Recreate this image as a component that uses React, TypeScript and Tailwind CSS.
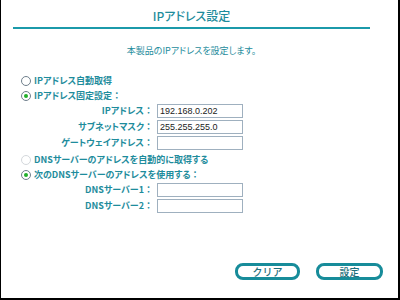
import React from "react";

const teal = "text-[#1e8c9c]";

function Colon() {
  return <span className="[font-feature-settings:normal]">：</span>;
}

function Radio({ checked, disabled }: { checked?: boolean; disabled?: boolean }) {
  return (
    <span
      className={`w-[10px] h-[10px] rounded-full border flex items-center justify-center bg-white ${
        disabled ? "border-[#d4d8dc]" : "border-[#6f7f8c]"
      }`}
    >
      {checked && <span className="w-[4px] h-[4px] rounded-full bg-[#21b02a]" />}
    </span>
  );
}

function RadioRow({ label, checked, disabled, colon }: { label: string; checked?: boolean; disabled?: boolean; colon?: boolean }) {
  return (
    <div className="h-[15px] flex items-center pl-[20px] gap-[3px]">
      <Radio checked={checked} disabled={disabled} />
      <span className={`text-[9px] leading-[15px] font-bold ${teal}`}>
        {label}
        {colon && <Colon />}
      </span>
    </div>
  );
}

function FieldRow({ label, value }: { label: string; value?: string }) {
  return (
    <div className="h-[16px] flex items-center">
      <span className={`w-[152px] text-right text-[9px] leading-[16px] font-bold ${teal}`}>
        {label}
        <Colon />
      </span>
      <div className="ml-[4px] w-[86px] h-[14px] border border-[#9fb0bf] bg-white flex items-center px-[2px]">
        <span className="text-[9px] leading-[12px] text-[#222] font-['Liberation_Sans',sans-serif]">{value}</span>
      </div>
    </div>
  );
}

export default function App() {
  return (
    <div className="w-[400px] h-[300px] bg-white border-l border-r-2 border-b-2 border-black flex flex-col font-['Noto_Sans_CJK_JP','Noto_Sans',sans-serif] [font-feature-settings:'palt'] overflow-hidden">
      <div className="ml-[12px] w-[357px] flex flex-col">
        <div className={`mt-[7px] h-[17px] text-center text-[12px] leading-[17px] font-medium ${teal}`}>
          IPアドレス設定
        </div>
        <div className="mt-[3px] h-[2px] bg-[#1b9aaa]" />
        <div className={`mt-[15px] h-[14px] text-center text-[9px] leading-[14px] ${teal}`}>
          本製品のIPアドレスを設定します。
        </div>
      </div>
      <div className="mt-[15px] flex flex-col">
        <RadioRow label="IPアドレス自動取得" />
        <RadioRow label="IPアドレス固定設定" colon checked />
        <FieldRow label="IPアドレス" value="192.168.0.202" />
        <FieldRow label="サブネットマスク" value="255.255.255.0" />
        <FieldRow label="ゲートウェイアドレス" />
        <div className="h-[1px]" />
        <RadioRow label="DNSサーバーのアドレスを自動的に取得する" disabled />
        <RadioRow label="次のDNSサーバーのアドレスを使用する" colon checked />
        <FieldRow label="DNSサーバー1" />
        <FieldRow label="DNSサーバー2" />
      </div>
      <div className="mt-[49px] flex justify-end gap-[16px] pr-[15px]">
        <button className="w-[65px] h-[17px] rounded-[8px] border-[3px] border-[#178c9a] bg-white flex items-center justify-center text-[10px] leading-[11px] font-medium text-[#1e6f7c] [font-feature-settings:normal]">
          クリア
        </button>
        <button className="w-[67px] h-[17px] rounded-[8px] border-[3px] border-[#178c9a] bg-white flex items-center justify-center text-[10px] leading-[11px] font-medium text-[#1e6f7c] [font-feature-settings:normal]">
          設定
        </button>
      </div>
    </div>
  );
}
